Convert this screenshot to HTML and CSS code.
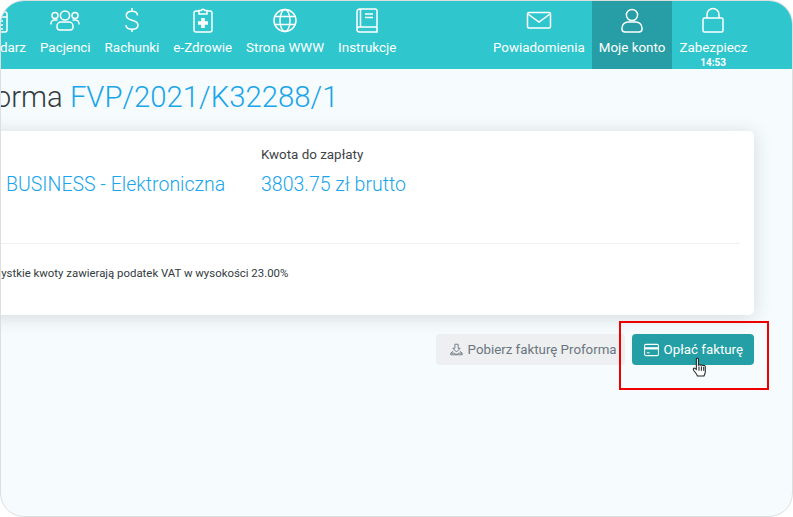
FILE: index.html
```html
<!DOCTYPE html>
<html lang="pl">
<head>
<meta charset="utf-8">
<title>Proforma</title>
<link rel="stylesheet" href="styles.css">
</head>
<body>
<div class="frame">
  <nav class="nav">
    <div class="nav-group nav-left">
      <a class="nav-item">
        <svg class="icon" viewBox="0 0 30 30"><rect x="4" y="7" width="22" height="20" rx="2"/><path d="M9 4v5M21 4v5M4 12h22M17 16h5M17 20h5M17 24h5"/></svg>
        <span>Kalendarz</span>
      </a>
      <a class="nav-item">
        <svg class="icon" viewBox="0 0 30 30"><circle cx="15" cy="10.500" r="4.600"/><circle cx="5" cy="10.500" r="3"/><circle cx="25" cy="10.500" r="3"/><path d="M7 22v-1a4 4 0 0 1 4-4h8a4 4 0 0 1 4 4v1a3 3 0 0 1-3 3H10a3 3 0 0 1-3-3zM1 19.500v-1a3.500 3.500 0 0 1 3.500-3.500H7.500M29 19.500v-1a3.500 3.500 0 0 0-3.500-3.500H22.500"/></svg>
        <span>Pacjenci</span>
      </a>
      <a class="nav-item">
        <svg class="icon" viewBox="0 0 30 30"><path d="M20.500 10.500c0-3-2.300-4.300-5.500-4.300s-5.700 1.600-5.700 4.300c0 6.300 11.700 3 11.700 9.400 0 2.800-2.500 4.300-6 4.300s-6-1.500-6-4.300M15 3v3.200M15 24.200V27"/></svg>
        <span>Rachunki</span>
      </a>
      <a class="nav-item">
        <svg class="icon" viewBox="0 0 30 30"><path d="M11 6H8a2 2 0 0 0-2 2v17a2 2 0 0 0 2 2h14a2 2 0 0 0 2-2V8a2 2 0 0 0-2-2h-3"/><path d="M11 5.500h2.300a1.800 1.800 0 0 1 3.400 0H19V9h-8z"/><path class="solid" d="M13.200 13h3.600v3.200H20v3.600h-3.200V23h-3.600v-3.200H10v-3.600h3.200z"/></svg>
        <span>e-Zdrowie</span>
      </a>
      <a class="nav-item">
        <svg class="icon" viewBox="0 0 30 30"><circle cx="15" cy="15.500" r="11"/><ellipse cx="15" cy="15.500" rx="5" ry="11"/><path d="M5 11.500h20M5 19.500h20"/></svg>
        <span>Strona WWW</span>
      </a>
      <a class="nav-item">
        <svg class="icon" viewBox="0 0 30 30"><path d="M5 24.500V7a3 3 0 0 1 3-3h15a2 2 0 0 1 2 2v15a1 1 0 0 1-1 1H7.500a2.500 2.500 0 0 0 0 5H25v-5M8.500 4v18M13 9h8M13 12.500h8"/></svg>
        <span>Instrukcje</span>
      </a>
    </div>
    <div class="nav-group">
      <a class="nav-item">
        <svg class="icon" viewBox="0 0 30 30"><rect x="3.500" y="7.500" width="23" height="15.500" rx="1.500"/><path d="M4 9l11 8 11-8"/></svg>
        <span>Powiadomienia</span>
      </a>
      <a class="nav-item nav-active">
        <svg class="icon" viewBox="0 0 30 30"><circle cx="15" cy="10" r="5.600"/><path d="M8 27a3 3 0 0 1-3-3v-1a6 6 0 0 1 6-6h8a6 6 0 0 1 6 6v1a3 3 0 0 1-3 3z"/></svg>
        <span>Moje konto</span>
      </a>
      <a class="nav-item nav-lock">
        <svg class="icon" viewBox="0 0 30 30"><rect x="5" y="13" width="20" height="14" rx="1.500"/><path d="M9 13V9.500a6 6 0 0 1 12 0V13"/></svg>
        <span>Zabezpiecz</span>
        <small class="timer">14:53</small>
      </a>
    </div>
  </nav>

  <main class="main">
    <h1 class="title">Proforma <span class="accent">FVP/2021/K32288/1</span></h1>
    <section class="card">
      <div class="card-top">
        <div class="col col-plan">
          <div class="label">Plan</div>
          <div class="value">BUSINESS - Elektroniczna</div>
        </div>
        <div class="col">
          <div class="label label-shown">Kwota do zapłaty</div>
          <div class="value">3803.75 zł brutto</div>
        </div>
      </div>
      <hr class="rule">
      <p class="note">Wszystkie kwoty zawierają podatek VAT w wysokości 23.00%</p>
    </section>
    <div class="actions">
      <button class="btn btn-grey">
        <svg class="btn-icon" viewBox="0 0 16 16"><path d="M6 1.500h4v5h2.500L8 11 3.500 6.500H6zM4 10l-3 2.500v2h14v-2L12 10M1 12.500h4.500l1 1.200h3l1-1.200H15"/></svg>
        Pobierz fakturę Proforma
      </button>
      <button class="btn btn-teal">
        <svg class="btn-icon btn-icon-card" viewBox="0 0 16 14"><rect x="0.600" y="1" width="14.800" height="12" rx="1.500"/><path class="band" d="M1 4h14v2.400H1z"/><path d="M3 10h3"/></svg>
        Opłać fakturę
      </button>
    </div>
  </main>

  <div class="callout"></div>
  <svg class="cursor" viewBox="0 0 14 20"><path d="M4 1.500c.8-.7 2-.3 2 .8v6c0-1 2.200-1.200 2.300 0 0-1 2.100-1 2.200.3.200-.9 2-.8 2 .5v4.900c0 2-.8 2.500-1.200 4H5c-.5-1.700-1.700-2.800-3.300-4.900-1.400-2-.2-3.100 1-2.200L4 11.800V2.300c0-.3 0-.6 0-.8z"/><path d="M6.500 9v4M8.800 9v4M11 9.500V13"/></svg>
</div>
</body>
</html>
```
FILE: styles.css
```css
* { box-sizing: border-box; }
html, body { margin: 0; padding: 0; background: #fff; }
body { width: 793px; height: 517px; overflow: hidden; font-family: Roboto, "Liberation Sans", sans-serif; }

.frame {
  position: relative;
  width: 793px;
  height: 517px;
  overflow: hidden;
  border: 1px solid #dcdfe0;
  border-radius: 24px;
  background: #f6fbfd;
}

.nav {
  display: flex;
  justify-content: space-between;
  height: 68px;
  background: #2fc6ce;
  color: #fff;
}
.nav-group { display: flex; }
.nav-left { margin-left: -41.500px; }
.nav-item {
  position: relative;
  display: flex;
  flex-direction: column;
  align-items: center;
  height: 68px;
  padding: 4px 7px 0;
  font-size: 13.4px;
  line-height: 15px;
  white-space: nowrap;
}
.nav-item span { margin-top: 5px; }
.icon {
  width: 30px;
  height: 30px;
  fill: none;
  stroke: #fff;
  stroke-width: 1.5;
  overflow: visible;
}
.icon .solid { fill: #fff; stroke: none; }
.nav-active { background: #279ea5; }
.nav-lock { padding-right: 44.500px; }
.timer {
  position: absolute;
  left: 0;
  right: 38px;
  top: 56px;
  font-size: 10px;
  line-height: 12px;
  font-weight: 700;
  text-align: center;
}

.main { display: flex; flex-direction: column; margin-left: -60px; margin-right: 38px; }
.title {
  margin: 10px 0 0;
  font-size: 29.300px;
  line-height: 36px;
  font-weight: 300;
  color: #333b40;
  white-space: nowrap;
}
.accent { color: #19a5ea; }

.card {
  margin-top: 16px;
  height: 184px;
  padding: 16px 14px 0 65px;
  background: #fff;
  border-radius: 5px;
  box-shadow: 0 2px 18px rgba(60, 70, 75, .18);
}
.card-top { display: flex; height: 96px; }
.col-plan { width: 255px; }
.label { font-size: 13.4px; line-height: 15px; color: #fff; }
.label-shown { color: #3d4347; }
.value { margin-top: 11px; font-size: 19.500px; line-height: 24px; font-weight: 300; color: #19a5ea; white-space: nowrap; }
.rule { margin: 0 0 0 -30px; border: 0; border-top: 1px solid #eef0f1; }
.note { margin: 22px 0 0 -26.500px; font-size: 11.400px; line-height: 14px; color: #333b40; white-space: nowrap; }

.actions { display: flex; justify-content: flex-end; gap: 7px; margin-top: 19px; }
.btn {
  display: flex;
  align-items: center;
  gap: 5px;
  height: 31px;
  padding: 0 11px 0 12px;
  border: 0;
  border-radius: 4px;
  font-family: inherit;
  font-size: 13.300px;
  white-space: nowrap;
}
.btn-grey { background: #eeeff0; color: #6b7680; padding: 0 8px 0 14px; }
.btn-teal { background: #259fa6; color: #fff; }
.btn-icon { width: 13px; height: 15px; fill: none; stroke: currentColor; stroke-width: 1.100; }
.btn-icon-card { width: 15px; height: 14px; }
.band { fill: currentColor; stroke: none; }

.callout {
  position: absolute;
  left: 618px;
  top: 320px;
  width: 150px;
  height: 69px;
  border: 2px solid #ee0000;
  pointer-events: none;
}
.cursor {
  position: absolute;
  left: 691px;
  top: 356px;
  width: 15px;
  height: 21px;
  fill: #fff;
  stroke: #222;
  stroke-width: 1;
}
```
